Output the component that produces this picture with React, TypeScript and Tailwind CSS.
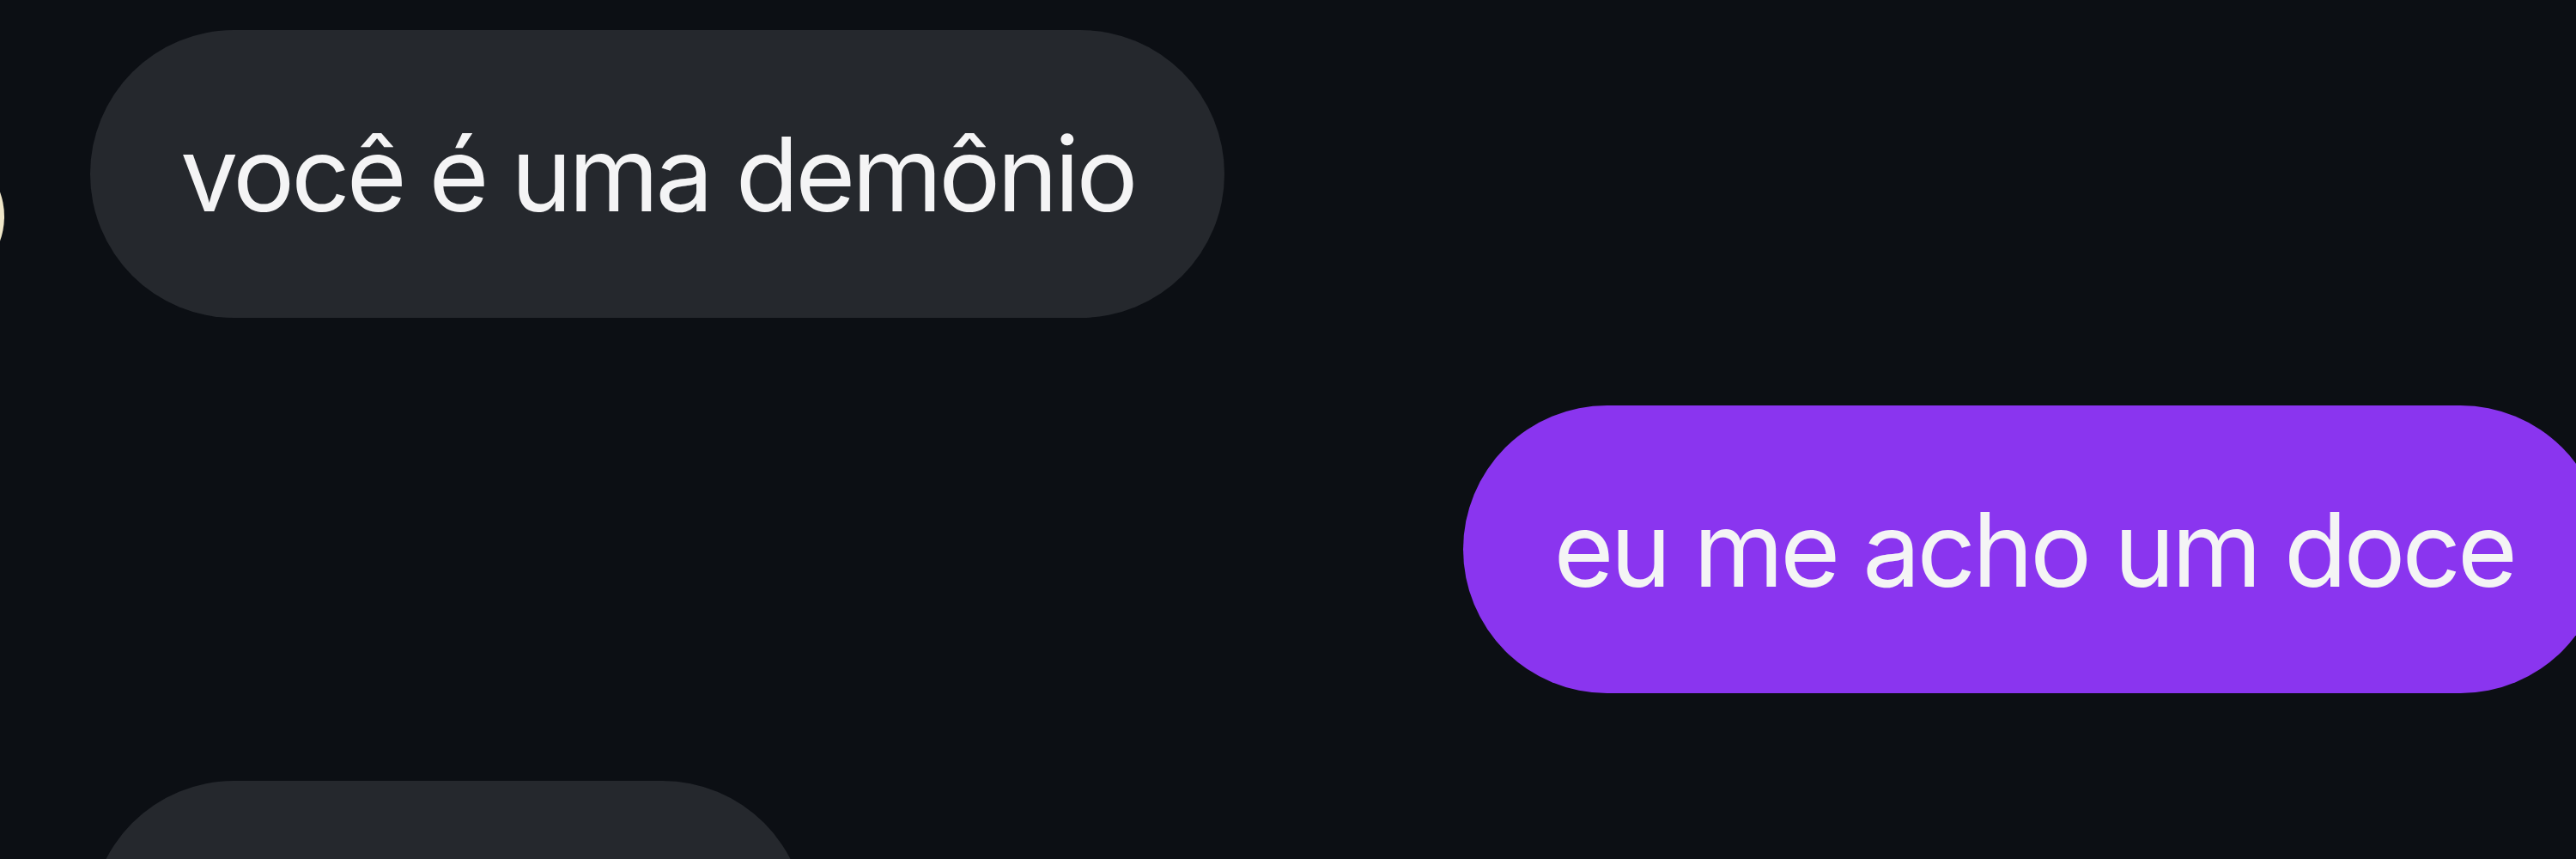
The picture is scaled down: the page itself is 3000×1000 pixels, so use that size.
const FONT = "font-['Inter','Noto_Sans',sans-serif]";

export default function App() {
  return (
    <div
      className={`w-[3000px] h-[1000px] overflow-hidden bg-[#0c0f14] text-[#f4f4f5] ${FONT}`}
    >
      <div className="flex flex-col gap-[102px] pt-[35px]">
        {/* them */}
        <div className="flex items-end">
          <div className="w-[168px] h-[168px] shrink-0 rounded-full bg-[#efe6c8] ml-[-163px] mb-[34px] mr-[100px]" />
          <Bubble>você é uma demônio</Bubble>
        </div>

        {/* me */}
        <div className="flex justify-end mr-[-33px]">
          <div className="h-[335px] flex items-center rounded-full bg-[#8a35ef] px-[105px] text-[120px] leading-none tracking-[-0.033em] whitespace-nowrap">
            eu me acho um doce
          </div>
        </div>

        {/* them, cut off */}
        <div className="flex pl-[105px]">
          <div className="h-[335px] w-[834px] flex items-center justify-center rounded-full bg-[#25282d] text-[120px] leading-none tracking-[-0.033em] whitespace-nowrap">
            claro que é
          </div>
        </div>
      </div>
    </div>
  );
}

function Bubble({ children }: { children: React.ReactNode }) {
  return (
    <div className="h-[335px] flex items-center rounded-full bg-[#25282d] px-[105px] text-[120px] leading-none tracking-[-0.033em] whitespace-nowrap">
      {children}
    </div>
  );
}
